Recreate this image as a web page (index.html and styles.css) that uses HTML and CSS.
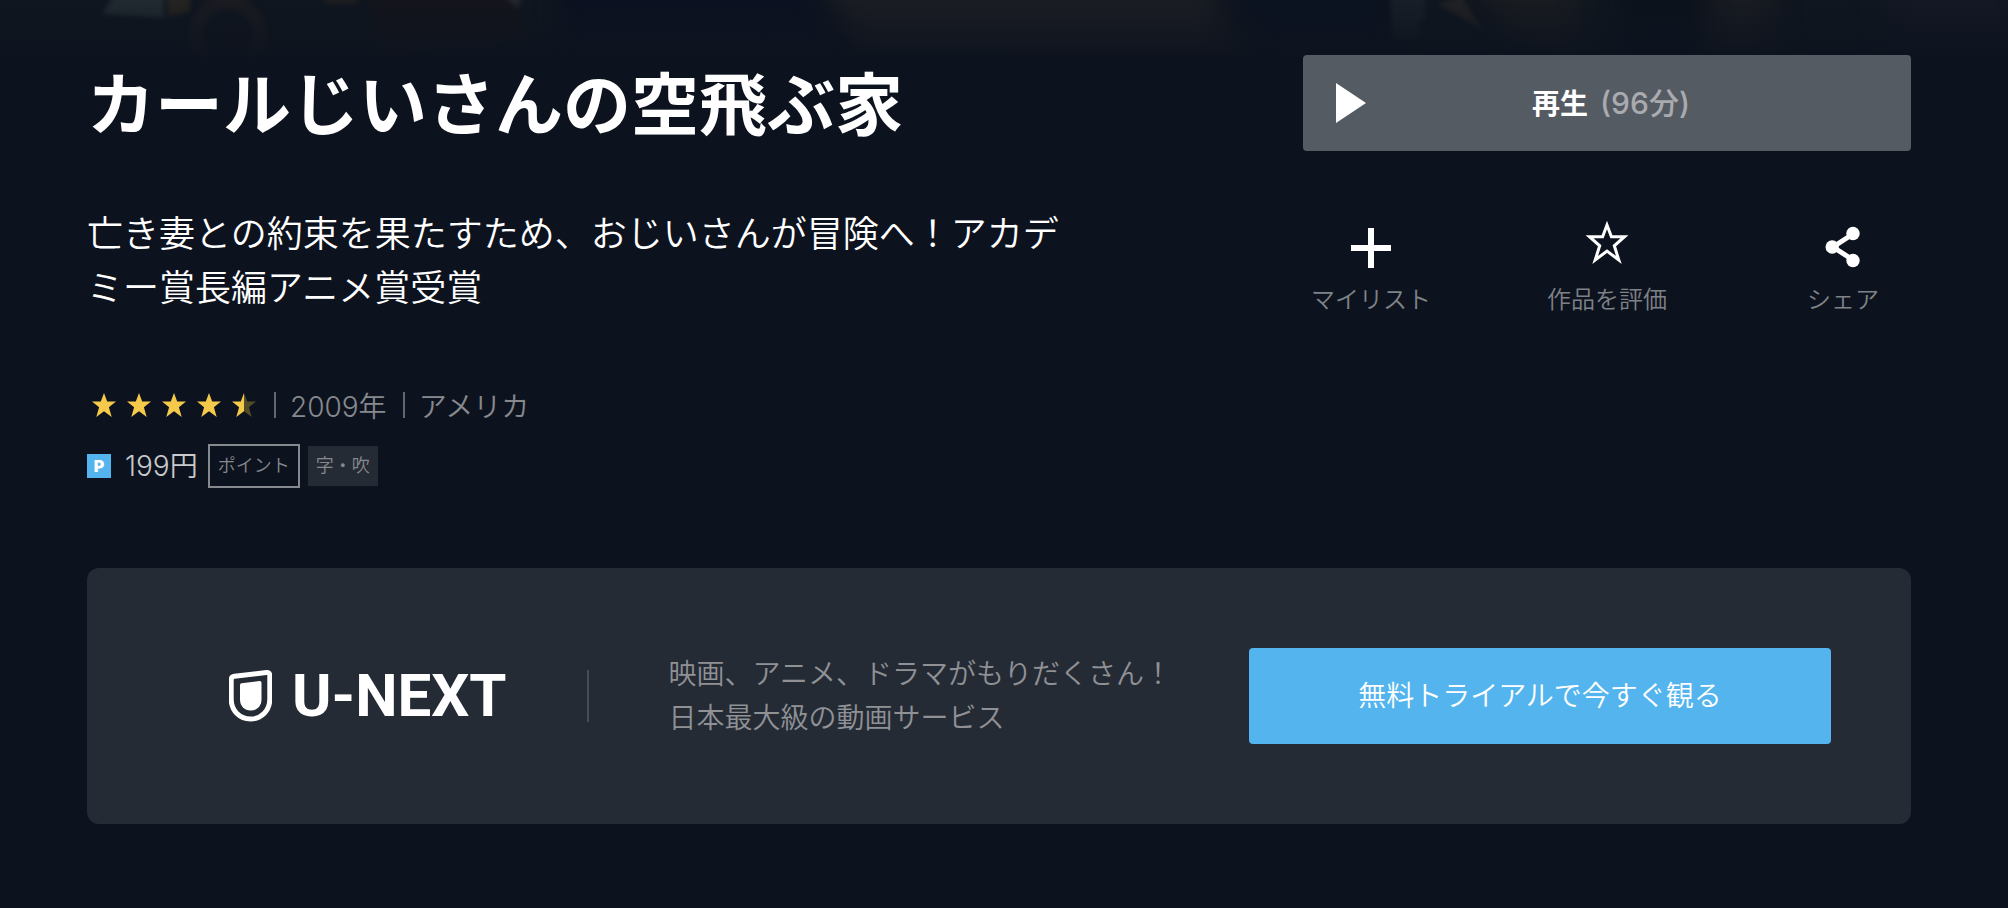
FILE: index.html
```
<!DOCTYPE html>
<html lang="ja">
<head>
    <meta charset="UTF-8">
    <title>カールじいさんの空飛ぶ家 | U-NEXT</title>
    <link rel="stylesheet" href="styles.css">
</head>
<body>
    <svg class="hero" viewBox="0 0 2008 60" preserveAspectRatio="none" aria-hidden="true">
        <defs>
            <linearGradient id="fade" x1="0" y1="0" x2="0" y2="1">
                <stop offset="0" stop-color="#0d131e" stop-opacity="0"/>
                <stop offset="1" stop-color="#0d131e"/>
            </linearGradient>
            <filter id="soft" color-interpolation-filters="sRGB"><feGaussianBlur stdDeviation="2"/></filter>
            <filter id="softer" color-interpolation-filters="sRGB"><feGaussianBlur stdDeviation="12 4"/></filter>
        </defs>
        <rect width="2008" height="60" fill="#10161f"/>
        <g filter="url(#softer)">
            <path d="M560 -20H800L850 60H560Z" fill="#0b1120"/>
            <path d="M830 -20H1200L1240 60H860Z" fill="#1b1d23"/>
            <path d="M1225 -20H1390V60H1270Z" fill="#0b1220"/>
            <path d="M1470 -20H1580V60L1510 40Z" fill="#181b20"/>
            <path d="M1620 -20H1705V60H1620Z" fill="#0c121c"/>
            <path d="M1710 -20H1775V60H1705Z" fill="#181b21"/>
            <path d="M1880 -20H2020V60H1890Z" fill="#131824"/>
        </g>
        <g filter="url(#soft)">
            <path d="M118 -10H164V18L102 14Z" fill="#212a30"/>
            <path d="M166 -10H190V12L168 17Z" fill="#242320"/>
            <ellipse cx="228" cy="36" rx="32" ry="34" fill="none" stroke="#1a1b21" stroke-width="14"/>
            <ellipse cx="230" cy="40" rx="14" ry="14" fill="#10131c"/>
            <path d="M325 -10H358V3H325Z" fill="#1f1f20"/>
            <path d="M368 -10H500L520 10V40L380 60Z" fill="#14151c"/>
            <path d="M500 -10H526L517 9Z" fill="#24272c"/>
            <path d="M1390 -10H1425V20H1420V40H1392Z" fill="#181e27"/>
            <path d="M1438 4L1462 -4L1482 30Z" fill="#202124"/>
        </g>
        <rect width="2008" height="60" fill="url(#fade)"/>
    </svg>

    <main class="page">
        <section class="detail">
            <div class="info">
                <h1 class="title">カールじいさんの空飛ぶ家</h1>
                <p class="catch">亡き妻との約束を果たすため、おじいさんが冒険へ！アカデミー賞長編アニメ賞受賞</p>

                <div class="meta">
                    <span class="stars" role="img" aria-label="評価 4.5">
                        <svg viewBox="0 0 24 24"><path d="M12 0l3.2 8.500H24l-7.100 5.700 2.800 9.800L12 18.300l-7.700 5.700 2.800-9.800L0 8.500h8.800z"/></svg>
                        <svg viewBox="0 0 24 24"><path d="M12 0l3.2 8.500H24l-7.100 5.700 2.800 9.800L12 18.300l-7.700 5.700 2.800-9.800L0 8.500h8.800z"/></svg>
                        <svg viewBox="0 0 24 24"><path d="M12 0l3.2 8.500H24l-7.100 5.700 2.800 9.800L12 18.300l-7.700 5.700 2.800-9.800L0 8.500h8.800z"/></svg>
                        <svg viewBox="0 0 24 24"><path d="M12 0l3.2 8.500H24l-7.100 5.700 2.800 9.800L12 18.300l-7.700 5.700 2.800-9.800L0 8.500h8.800z"/></svg>
                        <svg viewBox="0 0 24 24"><path class="off" d="M12 0l3.2 8.500H24l-7.100 5.700 2.800 9.800L12 18.300z"/><path d="M12 0v18.300l-7.700 5.700 2.800-9.800L0 8.500h8.800z"/></svg>
                    </span>
                    <span class="meta-item">2009年</span>
                    <span class="meta-item">アメリカ</span>
                </div>

                <div class="price">
                    <span class="p-mark">P</span>
                    <span class="yen">199円</span>
                    <span class="tag tag-line">ポイント</span>
                    <span class="tag">字・吹</span>
                </div>
            </div>

            <div class="side">
                <button type="button" class="play">
                    <svg class="play-icon" viewBox="0 0 30 40"><path d="M0 0L30 20L0 40Z"/></svg>
                    <span>再生<span class="minutes">(96分)</span></span>
                </button>
                <div class="actions">
                    <button type="button" class="action">
                        <svg viewBox="0 0 44 44"><path d="M19 3h6v17h17v6H25v17h-6V26H2v-6h17z"/></svg>
                        マイリスト
                    </button>
                    <button type="button" class="action">
                        <svg viewBox="0 0 44 44"><path class="outline" d="M22 0L26.400 11.700H39.500L29.300 20.800L33.800 35L22 26.100L10.200 35L14.700 20.800L4.500 11.700H17.600Z"/></svg>
                        作品を評価
                    </button>
                    <button type="button" class="action">
                        <svg viewBox="0 0 44 44"><path class="link-line" d="M32 9L12 22L32 35"/><circle cx="32" cy="8.500" r="6.700"/><circle cx="11.200" cy="22" r="6.700"/><circle cx="32" cy="35.500" r="6.700"/></svg>
                        シェア
                    </button>
                </div>
            </div>
        </section>

        <section class="promo">
            <div class="logo">
                <svg class="shield" viewBox="0 0 43 52"><path class="shield-line" d="M5.500 6.300L37.500 2.500Q40.800 2.200 40.800 5.500V29C40.800 41 32 49 21.500 49S2.200 41 2.200 29V10Q2.200 6.700 5.500 6.300Z"/><path d="M12.500 13.200L30.500 11Q32.500 10.800 32.500 12.800V29.500C32.500 36 28 40.500 21.700 40.500S11 36 11 29.500V15Q11 13.400 12.500 13.200Z"/></svg>
                <span class="logo-text">U-NEXT</span>
            </div>
            <p class="promo-text">映画、アニメ、ドラマがもりだくさん！<br>日本最大級の動画サービス</p>
            <a class="trial" href="#">無料トライアルで今すぐ観る</a>
        </section>
    </main>
</body>
</html>
```
FILE: styles.css
```
* {
    box-sizing: border-box;
}
body {
    margin: 0;
    background-color: #0d131e;
    color: #fff;
    font-family: Inter, "Noto Sans CJK JP", sans-serif;
    font-weight: 350;
    font-size: 28px;
}
h1, p {
    margin: 0;
}
button {
    border: none;
    font-family: inherit;
    cursor: pointer;
}
svg {
    display: block;
    fill: #fff;
}
/* bottom edge of the key visual, behind the page */
.hero {
    position: absolute;
    top: 0;
    left: 0;
    width: 100%;
    height: 60px;
}
.page {
    position: relative;
    padding: 55px 97px 80px 87px;
}
.detail {
    display: flex;
    justify-content: space-between;
    gap: 40px;
}
.info {
    flex: 1;
    max-width: 980px;
}
.title {
    font-size: 68px;
    font-weight: 700;
    line-height: 100px;
}
.catch {
    margin-top: 52px;
    font-size: 36px;
    line-height: 54px;
}
.meta {
    display: flex;
    align-items: center;
    margin-top: 70px;
    height: 40px;
    color: #86898e;
}
.stars {
    display: flex;
    gap: 11px;
    padding: 0 18px 0 5px;
}
.stars svg {
    width: 24px;
    height: 24px;
    fill: #f5ca4b;
}
.stars .off {
    fill: #534a28;
}
.meta-item {
    display: flex;
    align-items: center;
}
.meta-item::before {
    content: "";
    width: 2px;
    height: 26px;
    margin-right: 14px;
    background-color: #63676e;
}
.meta-item + .meta-item {
    margin-left: 16px;
}
.price {
    display: flex;
    align-items: center;
    height: 44px;
    margin-top: 19px;
}
.p-mark {
    width: 24px;
    height: 24px;
    margin-right: 14px;
    background-color: #53b4ee;
    font-size: 16px;
    font-weight: 900;
    line-height: 24px;
    text-align: center;
}
.yen {
    margin-right: 10px;
    font-size: 28px;
    line-height: 40px;
    color: #c8cacc;
}
.tag {
    padding: 0 8px;
    background-color: #252b35;
    color: #86898e;
    font-size: 18px;
    line-height: 40px;
}
.tag-line {
    margin-right: 8px;
    border: 2px solid #86898e;
    background: none;
}
.side {
    flex: none;
    width: 608px;
}
.play {
    position: relative;
    display: flex;
    align-items: center;
    justify-content: center;
    width: 100%;
    height: 96px;
    padding: 0 0 4px 8px;
    border-radius: 4px;
    background-color: #555b63;
    color: #fff;
    font-size: 28px;
    font-weight: 700;
}
.play:hover {
    background-color: #666c74;
}
.play-icon {
    position: absolute;
    top: 28px;
    left: 33px;
    width: 30px;
    height: 40px;
}
.minutes {
    margin-left: 12px;
    color: #a9abaf;
    font-size: 30px;
    font-weight: 500;
}
.actions {
    display: flex;
    justify-content: space-between;
    margin-top: 74px;
    padding: 0 8px;
}
.action {
    display: flex;
    flex-direction: column;
    align-items: center;
    gap: 13px;
    width: 120px;
    padding: 0;
    background: none;
    color: #7f8287;
    font-size: 24px;
    font-weight: 350;
    line-height: 36px;
    white-space: nowrap;
}
.action svg {
    width: 44px;
    height: 44px;
    overflow: visible;
}
.action .outline {
    fill: none;
    stroke: #fff;
    stroke-width: 3;
}
.action .link-line {
    fill: none;
    stroke: #fff;
    stroke-width: 5;
}
.promo {
    display: flex;
    align-items: center;
    margin-top: 80px;
    padding: 80px 80px 80px 142px;
    border-radius: 12px;
    background-color: #252b35;
}
.logo {
    display: flex;
    align-items: center;
    height: 52px;
    padding-right: 80px;
    border-right: 2px solid #484d55;
}
.shield {
    width: 43px;
    height: 52px;
    margin-right: 20px;
}
.shield-line {
    fill: none;
    stroke: #fff;
    stroke-width: 5;
}
.logo-text {
    font-family: Roboto, sans-serif;
    font-size: 60px;
    font-weight: 700;
    line-height: 52px;
}
.promo-text {
    margin-left: 80px;
    color: #8f9195;
    line-height: 44px;
}
.trial {
    width: 582px;
    margin-left: auto;
    border-radius: 4px;
    background-color: #53b4ee;
    color: #fff;
    line-height: 96px;
    text-align: center;
    text-decoration: none;
}
.trial:hover {
    background-color: #6fc2f3;
}
```
